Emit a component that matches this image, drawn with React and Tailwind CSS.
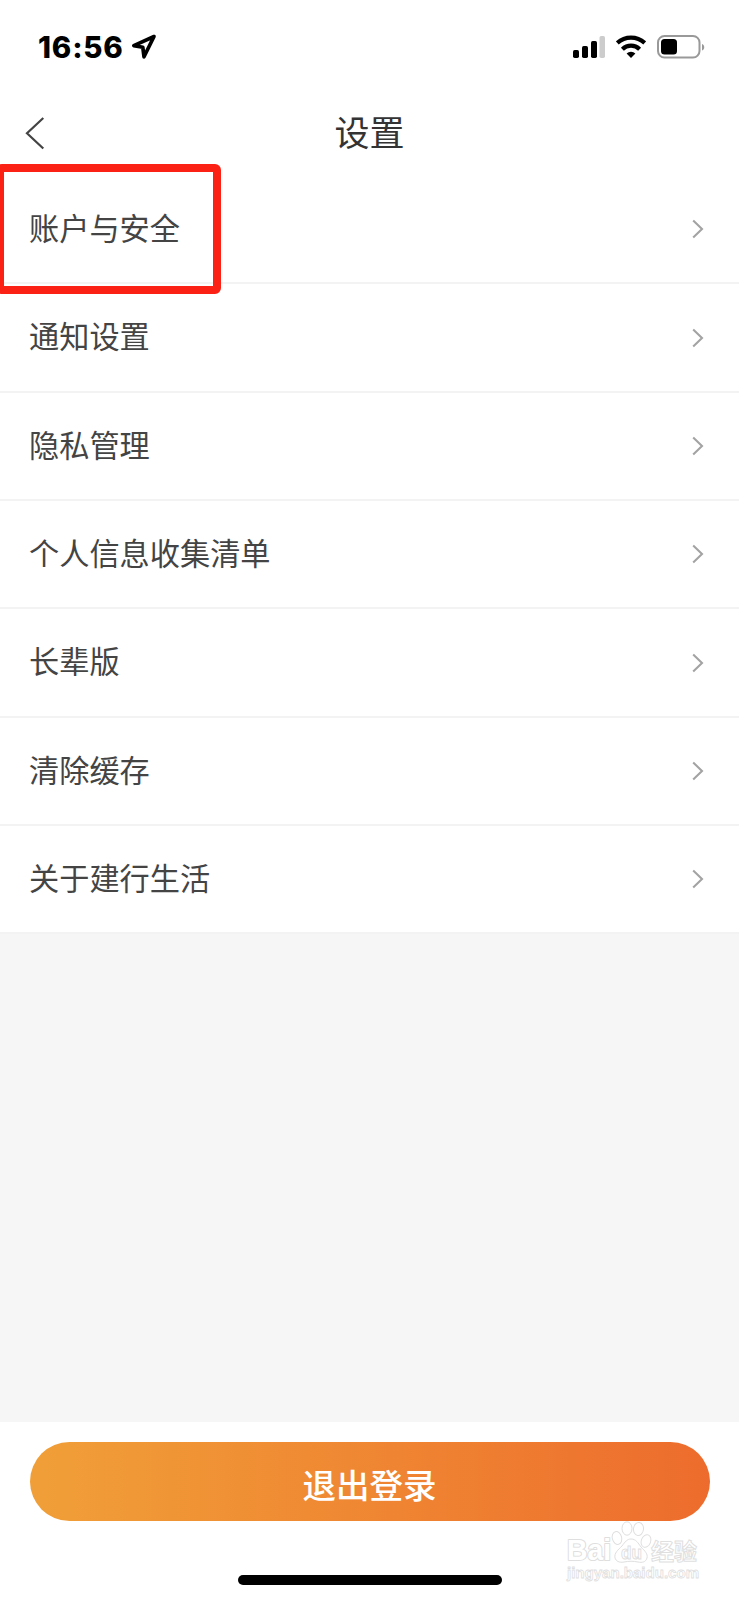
import React from "react";

const items = ["账户与安全", "通知设置", "隐私管理", "个人信息收集清单", "长辈版", "清除缓存", "关于建行生活"];

function StatusBar() {
  return (
    <div className="flex h-[94px] items-center justify-between pr-[34px] pl-[38px]">
      <div className="flex items-center gap-[7px]">
        <span className="pt-[2px] font-['Inter'] text-[29.500px] leading-none font-extrabold tracking-[0.8px] text-black">16:56</span>
        <svg className="h-[28px] w-[26px]" viewBox="0 0 26 28" fill="none">
          <path d="M23 3.500 2.800 12.600l9 1.700 1.200 9.500Z" stroke="#000" strokeWidth="3.7" strokeLinejoin="round" />
        </svg>
      </div>
      <div className="flex items-center">
        <svg className="mr-[11px] h-[24px] w-[32px]" viewBox="0 0 32 24">
          <rect x="0" y="15" width="6" height="8" rx="1.7" />
          <rect x="9" y="11" width="6" height="12" rx="1.7" />
          <rect x="18" y="6" width="6" height="17" rx="1.7" />
          <rect x="26.5" y="1" width="5.5" height="22" rx="1.7" fill="#ccc" />
        </svg>
        <svg className="mr-[11px] h-[24px] w-[30px]" viewBox="0 0 30 24" fill="none" stroke="#000" strokeWidth="4.2">
          <path d="M1.3 8a20.3 20.3 0 0 1 27.4 0" />
          <path d="M6.4 14.2a12.3 12.3 0 0 1 17.2 0" />
          <path d="M10.600 18.600a6.400 6.400 0 0 1 8.800 0L15 23Z" fill="#000" stroke="none" />
        </svg>
        <svg className="h-[24px] w-[48px]" viewBox="0 0 48 24">
          <rect x="1" y="1" width="41.5" height="21.5" rx="6.5" fill="none" stroke="#999" strokeWidth="2" />
          <rect x="4" y="4" width="16" height="15.5" rx="3.5" />
          <path d="M45 9c3 1 3 5.500 0 6.500Z" fill="#999" />
        </svg>
      </div>
    </div>
  );
}

function Watermark() {
  return (
    <svg className="absolute top-[1518px] left-[564px] h-[68px] w-[140px]" viewBox="0 0 140 68" fill="#fff" stroke="#dfdfdf" strokeWidth="1">
      <text x="3" y="42" fontFamily="Liberation Sans, sans-serif" fontWeight="700" fontSize="29" textLength="44" lengthAdjust="spacingAndGlyphs" strokeWidth="2.2" strokeLinejoin="round" paintOrder="stroke">Bai</text>
      <ellipse cx="53" cy="20" rx="4.700" ry="6.500" transform="rotate(-15 53 20)" />
      <ellipse cx="63" cy="10.500" rx="5" ry="6.700" />
      <ellipse cx="74.500" cy="11" rx="5" ry="6.500" transform="rotate(8 74.500 11)" />
      <ellipse cx="82" cy="23" rx="4.700" ry="6.500" transform="rotate(20 82 23)" />
      <path d="M67 21c5 0 7 4 10 8 4 4 7 7 6 11-1 4-5 5-9 4-5-1-9-1-14 0s-8-1-9-4c-1-5 3-8 7-12 3-4 5-7 9-7Z" />
      <text x="57" y="41" fontFamily="Liberation Sans, sans-serif" fontWeight="700" fontSize="19" textLength="21" lengthAdjust="spacingAndGlyphs">du</text>
      <text x="87" y="42" fontFamily="Noto Sans CJK SC, sans-serif" fontWeight="700" fontSize="23" textLength="46" lengthAdjust="spacingAndGlyphs">经验</text>
      <text x="3" y="60" fontFamily="Liberation Sans, sans-serif" fontWeight="700" fontSize="15" textLength="132" lengthAdjust="spacingAndGlyphs" strokeWidth="0.8">jingyan.baidu.com</text>
    </svg>
  );
}

export default function App() {
  return (
    <div className="relative flex h-[1600px] w-[739px] flex-col overflow-hidden bg-white font-['Noto_Sans_CJK_SC',sans-serif]">
      <StatusBar />
      <header className="grid h-[82px] grid-cols-[1fr_auto_1fr] items-center">
        <svg className="mt-[-5px] ml-[25px] h-[34px] w-[20px]" viewBox="0 0 20 34" fill="none" stroke="#444" strokeWidth="2.2">
          <path d="M18.300 2 2 17.200 18.300 32.500" />
        </svg>
        <h1 className="mt-[-9px] text-[35px] leading-none text-[#333]">设置</h1>
      </header>
      <ul>
        {items.map((label) => (
          <li key={label} className="flex h-[108.350px] items-center justify-between border-b-2 border-[#f3f3f3] pr-[35px] pl-[29px]">
            <span className="pb-[4px] text-[30.200px] leading-none text-[#444]">{label}</span>
            <svg className="h-[20px] w-[12px]" viewBox="0 0 12 20" fill="none" stroke="#a3a3a3" strokeWidth="2.100">
              <path d="M1.200 1.500 10 10 1.200 18.500" />
            </svg>
          </li>
        ))}
      </ul>
      <div className="flex-1 bg-[#f6f6f6]" />
      <footer className="flex h-[178px] flex-col items-center pt-[20px]">
        <button className="flex h-[79px] w-[680px] items-center justify-center rounded-full bg-linear-to-r from-[#f09f38] to-[#ed6c2d] pt-[4px] text-[33.500px] leading-none font-medium text-white">
          退出登录
        </button>
        <div className="mt-[54px] h-[10px] w-[264px] rounded-full bg-black" />
      </footer>
      <Watermark />
      <div className="absolute top-[164px] left-[-4px] h-[130px] w-[225px] rounded-[6px] border-8 border-[#fb2115]" />
    </div>
  );
}
